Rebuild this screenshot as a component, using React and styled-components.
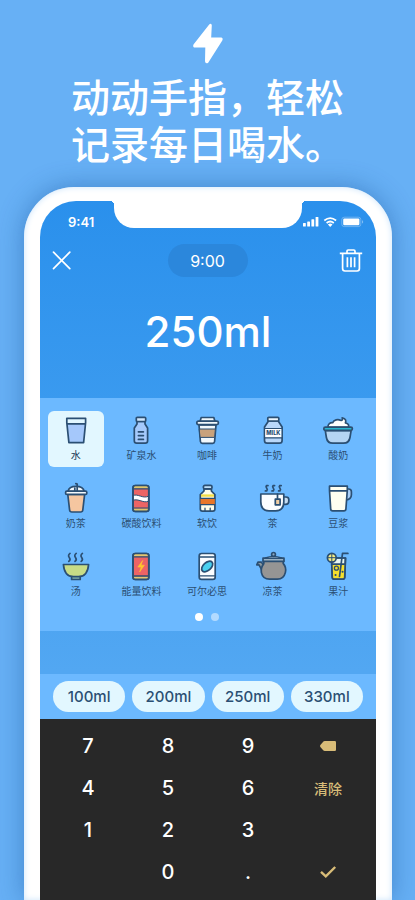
import React from 'react';
import styled, { createGlobalStyle } from 'styled-components';

const ink = '#2b4f73';

const GlobalStyle = createGlobalStyle`
  * {
    box-sizing: border-box;
  }
  body {
    margin: 0;
    background: #67b0f5;
    font-family: Inter, 'Noto Sans CJK SC', sans-serif;
  }
  button {
    margin: 0;
    padding: 0;
    border: 0;
    background: none;
    color: inherit;
    font: inherit;
    cursor: pointer;
  }
  svg {
    display: block;
    overflow: visible;
  }
`;
const Page = styled.main`
  display: flex;
  flex-direction: column;
  min-height: 100vh;
  overflow: hidden;
`;
const Intro = styled.header`
  display: flex;
  flex-direction: column;
  align-items: center;
  padding: 23px 0 19px;
`;
const Title = styled.h1`
  margin: 10px 0 0;
  color: #fff;
  font-size: 39px;
  font-weight: 500;
  line-height: 47px;
`;
const Phone = styled.section`
  flex: 1;
  display: flex;
  flex-direction: column;
  margin: 0 23px 0 24px;
  padding: 14px 16px 0;
  border-radius: 50px 50px 0 0;
  background: #fff;
  box-shadow: inset 0 0 6px #cbe4fb, 0 0 26px rgba(20, 80, 150, 0.45);
`;
const Screen = styled.div`
  flex: 1;
  display: flex;
  flex-direction: column;
  border-radius: 36px 36px 0 0;
  overflow: hidden;
  background: linear-gradient(#2a90ec 0, #3a9aef 200px, #52a7f2 470px);
`;
const StatusBar = styled.div`
  display: grid;
  grid-template-columns: 74px 1fr 74px;
  grid-template-rows: 27px;
  color: #fff;
`;
const Clock = styled.span`
  padding: 13px 0 0 28px;
  font-size: 13px;
  font-weight: 600;
  line-height: 16px;
`;
const Notch = styled.div`
  position: relative;
  border-radius: 0 0 20px 20px;
  background: #fff;
  &::before,
  &::after {
    content: '';
    position: absolute;
    top: 0;
    width: 4px;
    height: 4px;
  }
  &::before {
    right: 100%;
    background: radial-gradient(circle at 0 100%, transparent 4px, #fff 4px);
  }
  &::after {
    left: 100%;
    background: radial-gradient(circle at 100% 100%, transparent 4px, #fff 4px);
  }
`;
const Signals = styled.div`
  padding: 15px 0 0 1px;
`;
const Toolbar = styled.div`
  display: flex;
  align-items: center;
  justify-content: space-between;
  height: 33px;
  margin-top: 16px;
  padding: 0 13px 0 12px;
`;
const IconButton = styled.button`
  width: 24px;
  height: 24px;
`;
const TimeButton = styled.button`
  width: 80px;
  height: 33px;
  border-radius: 17px;
  background: #2b87dc;
  color: #fff;
  font-size: 16px;
`;
const Amount = styled.output`
  height: 121px;
  color: #fff;
  font-size: 42px;
  font-weight: 500;
  line-height: 110px;
  text-align: center;
`;
const Picker = styled.div`
  padding: 13px 5px 10px 3px;
  background: #6cb9ff;
`;
const DrinkGrid = styled.div`
  display: grid;
  grid-template-columns: repeat(5, 1fr);
  row-gap: 12px;
  justify-items: center;
`;
const DrinkButton = styled.button`
  display: flex;
  flex-direction: column;
  align-items: center;
  gap: 2px;
  width: 56px;
  height: 56px;
  padding-top: 4px;
  border-radius: 6px;
  background: ${props => (props.$active ? '#e2f7ff' : 'transparent')};
  color: ${props => (props.$active ? '#173a55' : ink)};
  font-size: 10px;
  line-height: 14px;
  white-space: nowrap;
`;
const Dots = styled.div`
  display: flex;
  justify-content: center;
  gap: 8px;
  padding-top: 10px;
`;
const Dot = styled.button`
  width: 8px;
  height: 8px;
  border-radius: 50%;
  background: ${props => (props.$active ? '#fff' : '#b3daff')};
`;
const QuickBar = styled.div`
  display: flex;
  gap: 7px;
  margin-top: 43px;
  padding: 7px 13px;
  background: #6cb9ff;
`;
const QuickButton = styled.button`
  flex: 1;
  height: 31px;
  border-radius: 16px;
  background: #e2f7ff;
  color: ${ink};
  font-size: 15px;
  font-weight: 500;
`;
const Keypad = styled.div`
  flex: 1;
  display: grid;
  grid-template-columns: repeat(4, 1fr);
  grid-auto-rows: 42px;
  padding: 6px 8px 7px;
  background: #282828;
`;
const Key = styled.button`
  display: flex;
  align-items: center;
  justify-content: center;
  grid-column: ${props => props.$col};
  color: ${props => (props.$action ? '#d8bc78' : '#fff')};
  font-size: ${props => (props.$action ? '14px' : '20px')};
  font-weight: 500;
`;

const Drawing = ({ children }) => (
  <svg
    width="32"
    height="31"
    viewBox="0 0 32 31"
    fill="none"
    stroke={ink}
    strokeWidth="1.7"
    strokeLinecap="round"
    strokeLinejoin="round"
    aria-hidden="true"
  >
    {children}
  </svg>
);

const Water = () => (
  <Drawing>
    <path d="M7 3.5h18.5L23.2 27.5H9.3Z" fill="#e2f7ff" stroke="none" />
    <path d="M7.4 9h17.6L23.2 27.5H9.3Z" fill="#a5c8fb" stroke="none" />
    <path d="M6.8 3.3h18.8V7.6L23.6 27.6H8.9L6.8 7.6ZM7.3 8.8h17.8" />
  </Drawing>
);
const MineralWater = () => (
  <Drawing>
    <path d="M12 6.5V9L9.3 13v12.8q0 2.4 2.4 2.4h8.5q2.4 0 2.4-2.4V13L20 9V6.5Z" fill="#a5cafc" />
    <rect x="11.3" y="2.3" width="9.4" height="4.2" rx="1" fill="#d2e8ff" />
    <path d="M13.4 16.8h5M13.4 20.6h5M13.4 24.4h5" />
  </Drawing>
);
const Coffee = () => (
  <Drawing>
    <path d="M8 10h17l-1.4 16.5q-.2 1.8-2 1.8H11.4q-1.8 0-2-1.8Z" fill="#f1f8fc" />
    <path d="M8.6 14h15.8l-.8 8.4H9.4Z" fill="#c8a27c" strokeWidth="1" />
    <path d="M9 6.5 10.2 2.5h12.6L24 6.5Z" fill="#f1f8fc" />
    <rect x="5.8" y="6.2" width="21.6" height="3.4" rx="1.6" fill="#f1f8fc" />
  </Drawing>
);
const Milk = () => (
  <Drawing>
    <path d="M11.5 6 7.5 12v13.5q0 2.7 2.7 2.7h12.2q2.7 0 2.7-2.7V12L21.2 6Z" fill="#b9d8fa" />
    <path d="M8.3 13.8h16v8.8h-16Z" fill="#fff" stroke="none" />
    <path d="M7.5 13.5h17.6M7.5 22.8h17.6" strokeWidth="1.2" />
    <rect x="10.8" y="2.3" width="11" height="3.7" rx="1" fill="#eff8ff" />
    <text x="16.4" y="20.2" textAnchor="middle" fill={ink} stroke="none" fontSize="5.6" fontWeight="800">
      MILK
    </text>
  </Drawing>
);
const Yogurt = () => (
  <Drawing>
    <path d="M6 12.4C5.6 9 8.4 7.4 10.7 7.7 11.9 4.8 16 4 18.4 5.3 20.3 5.9 21 4.4 20.2 2.8 24 3.4 24.2 6 23.4 7.8 26.8 8.6 27 10.6 26.4 12.4Z" fill="#fff" />
    <path d="M3.3 15.6h25.8L28 22.5q-1 5.7-6.6 5.7H10.9Q5.3 28.2 4.4 22.5Z" fill="#b5d5f3" />
    <rect x="1.8" y="12.2" width="28.6" height="3.2" rx="1.6" fill="#29b7d1" />
  </Drawing>
);
const MilkTea = () => (
  <Drawing>
    <path d="M7.8 11.5h16.8L22.8 27q-.2 2-2.2 2h-8.8q-2 0-2.2-2Z" fill="#f5c6a0" />
    <path d="M8 8.5C8.6 5 11.6 3.3 16 3.3S23.6 5 24.2 8.5Z" fill="#f3f9fd" />
    <rect x="5.6" y="8.2" width="21.2" height="3.2" rx="1.2" fill="#f3f9fd" />
    <path d="M14.8 8V5M17.2 8V1L15.8.6" />
  </Drawing>
);
const Soda = () => (
  <Drawing>
    <rect x="8" y="2.5" width="15.8" height="25.8" rx="2.4" fill="#ec6464" />
    <path d="M9 3h14l.4 2.6H8.6ZM8.6 25.4h14.8L23 28H9Z" fill="#dfc56b" stroke="none" />
    <path d="M8.4 12.4c4.5-2 9.5 3.6 15 .8v5c-4.8 2.4-10-3-15-1Z" fill="#fff" strokeWidth="1" />
    <path d="M8.5 5.9h15M8.5 25h15" strokeWidth="1.2" />
    <rect x="8" y="2.5" width="15.8" height="25.8" rx="2.4" />
  </Drawing>
);
const SoftDrink = () => (
  <Drawing>
    <path d="M13 6v2l-3.7 3.7v14.4q0 2.1 2.1 2.1h10.4q2.1 0 2.1-2.1V11.7L20.4 8V6Z" fill="#fffde9" />
    <path d="M10 11.4h13v2.3H10Z" fill="#f3dc45" stroke="none" />
    <path d="M9.5 15.6h14.3v5.7H9.5Z" fill="#e97628" stroke="none" />
    <path d="M9.5 15.3h14.3M9.5 21.6h14.3" strokeWidth="1.3" />
    <path d="M14 25.2v2.8M19.2 25.2v2.8" strokeWidth="1.3" />
    <rect x="12.4" y="2.3" width="8.6" height="3.6" rx="1.5" fill="#bfe0f8" />
  </Drawing>
);
const Tea = () => (
  <Drawing>
    <path d="M26.6 14h2.4q2.8 0 2.8 2.6v1.6q0 3.2-3.2 3.2h-2.6" fill="#c4dcf2" />
    <path d="M3.8 11h23v7.8q0 9-8.2 9h-6.6q-8.2 0-8.2-9Z" fill="#fbfdff" />
    <path d="M20.5 11v5.2M18.3 16.2h4.8v5.6h-4.8Z" fill="#f0cda2" />
    <path d="M11 2.6H9.5q-1 1.2.2 2.5t0 2.8H8.4M17.6 2.6h-1.5q-1 1.2.2 2.5t0 2.8H15M24.2 2.6h-1.5q-1 1.2.2 2.5t0 2.8h-1.3" />
  </Drawing>
);
const SoyMilk = () => (
  <Drawing>
    <path d="M24.5 6h2.2q2.7 0 2.7 2.8v2.9q0 4.5-5.6 5.3" fill="#a8cef7" />
    <path d="M7.5 3.2h17.8v4.2L23.9 26q-.1 1.8-2 1.8H10.7q-1.9 0-2-1.8L7.5 7.4Z" fill="#fffff1" />
    <path d="M8 7.8h16.9" />
  </Drawing>
);
const Soup = () => (
  <Drawing>
    <path d="M11.6 25.4h8.6v3h-8.6Z" fill="#ace0c6" />
    <path d="M3.4 13.5h25.2q-1 12.2-10 12.2h-5.2q-9 0-10-12.2Z" fill="#c8dc86" />
    <path d="M10 2.4q-2.4 1.8-.7 4t-.5 4M16.2 2.4q-2.4 1.8-.7 4t-.5 4M22.4 2.4q-2.4 1.8-.7 4t-.5 4" />
  </Drawing>
);
const EnergyDrink = () => (
  <Drawing>
    <rect x="8" y="2.5" width="15.8" height="25.8" rx="2.4" fill="#ed6365" />
    <path d="M9 3h14l.4 2.6H8.6ZM8.6 25.4h14.8L23 28H9Z" fill="#e4c671" stroke="none" />
    <path d="M8.5 5.9h15M8.5 25h15" strokeWidth="1.3" />
    <path d="m17.5 9.8-4.7 6.3h3.4l-1.6 4.9 4.8-6.8h-3.2Z" fill="#ffc52d" stroke="#ffc52d" strokeWidth=".6" />
    <rect x="8" y="2.5" width="15.8" height="25.8" rx="2.4" />
  </Drawing>
);
const Calpis = () => (
  <Drawing>
    <rect x="8.2" y="2.5" width="16" height="25.8" rx="2.4" fill="#fbfdff" />
    <path d="M8.7 6h15M8.7 24.8h15" strokeWidth="1.3" />
    <ellipse cx="16.2" cy="15.5" rx="6.5" ry="4" transform="rotate(-42 16.2 15.5)" fill="#49d0ef" />
  </Drawing>
);
const HerbalTea = () => (
  <Drawing>
    <path d="M5.4 19.8 1.8 13.6-.2 13.8 1 11l3.4.2 2.4 3" fill="#8d999f" />
    <path d="M6.8 8.4h19.4v4q3.4 4 2.2 9-1.6 6.8-8 6.8h-7.8q-6.8 0-8.2-6.6-.9-5 2.4-9Z" fill="#969594" />
    <path d="M6 7.2h21v3.2H6Z" fill="#9ab2c4" />
    <path d="M8.4 7q7.8-3 16.2 0" fill="#8eabc4" />
    <circle cx="16.5" cy="3.4" r="1.9" fill="#8ba8c1" />
  </Drawing>
);
const Juice = () => (
  <Drawing>
    <path d="M9.5 7h14l-.8 19.2q-.1 2-2.1 2h-8.2q-2 0-2.1-2Z" fill="#e7f6f3" />
    <path d="M10 13.5h12.8l-.6 12.4q-.1 1.5-1.6 1.5h-8q-1.6 0-1.7-1.5Z" fill="#f5df2d" stroke="none" />
    <path d="M9.5 7h14l-.8 19.2q-.1 2-2.1 2h-8.2q-2 0-2.1-2Z" />
    <path d="M9.8 13.2h13.3M17.5 25.5 20.5 2.4h5.4" />
    <circle cx="9.8" cy="6.7" r="4.4" fill="#f6ec82" />
    <path d="M9.8 2.7v8M5.8 6.7h8" strokeWidth="1" />
    <circle cx="14.4" cy="17.2" r="2" strokeWidth="1.3" />
    <path d="M13.5 24h.1M20.5 20.7h.1" strokeWidth="2" />
  </Drawing>
);

const drinks = [
  { name: '水', Icon: Water },
  { name: '矿泉水', Icon: MineralWater },
  { name: '咖啡', Icon: Coffee },
  { name: '牛奶', Icon: Milk },
  { name: '酸奶', Icon: Yogurt },
  { name: '奶茶', Icon: MilkTea },
  { name: '碳酸饮料', Icon: Soda },
  { name: '软饮', Icon: SoftDrink },
  { name: '茶', Icon: Tea },
  { name: '豆浆', Icon: SoyMilk },
  { name: '汤', Icon: Soup },
  { name: '能量饮料', Icon: EnergyDrink },
  { name: '可尔必思', Icon: Calpis },
  { name: '凉茶', Icon: HerbalTea },
  { name: '果汁', Icon: Juice },
];
const quickAmounts = ['100', '200', '250', '330'];
const digitRows = [['7', '8', '9'], ['4', '5', '6'], ['1', '2', '3'], ['', '0', '.']];

const Bolt = () => (
  <svg width="32" height="41" viewBox="0 0 32 41" aria-hidden="true">
    <path
      d="M17.2 1.5 1.5 21.4q-1.2 3 1.7 3.2h10.1L13 38.2q.4 3.2 3.2 1.6L30.3 17.5q1.2-2.6-1.3-2.9h-9.8L19.8 2.2q-.7-2.3-2.6-.7Z"
      fill="#fff"
    />
  </svg>
);
const SignalIcons = () => (
  <svg width="60" height="12" viewBox="0 0 60 12" fill="#fff" aria-hidden="true">
    <rect x="0" y="7" width="2.8" height="3.6" rx=".6" />
    <rect x="4.2" y="5.4" width="2.8" height="5.2" rx=".6" />
    <rect x="8.4" y="3.2" width="2.8" height="7.4" rx=".6" />
    <rect x="12.6" y="1" width="2.8" height="9.6" rx=".6" />
    <path d="M21.3 4.5q5.9-4.8 11.8 0M23.6 7q3.6-3 7.2 0" fill="none" stroke="#fff" strokeWidth="1.7" />
    <path d="m24.9 8.4 2.3 2.5 2.3-2.5q-2.3-1.8-4.6 0Z" />
    <rect x="38.8" y="1.2" width="19" height="9.4" rx="2.4" fill="none" stroke="#fff" strokeOpacity=".3" />
    <rect x="40.2" y="2.5" width="16.2" height="6.8" rx="1.2" />
    <path d="M59 4.2v3.4q1.2-.4 1.2-1.7T59 4.2Z" fillOpacity=".4" />
  </svg>
);
const CloseIcon = () => (
  <svg width="20" height="24" viewBox="0 0 20 24" stroke="#fff" strokeWidth="1.7" strokeLinecap="round" aria-hidden="true">
    <path d="m1.5 3.2 16.3 16.4M17.8 3.2 1.5 19.6" />
  </svg>
);
const TrashIcon = () => (
  <svg width="24" height="24" viewBox="0 0 24 24" fill="none" stroke="#fff" strokeWidth="1.7" aria-hidden="true">
    <path d="M.8 4.4h22.4M8 4V2.2q0-1.2 1.2-1.2h5.6Q16 1 16 2.2V4M3.6 4.8v14.8q0 2.4 2.4 2.4h12q2.4 0 2.4-2.4V4.8M8.4 8.2v10M12 8.2v10M15.6 8.2v10" />
  </svg>
);

export default function App() {
  const [selected, setSelected] = React.useState('水');
  const [amount, setAmount] = React.useState('250');
  const [page, setPage] = React.useState(0);

  const press = key => setAmount(amount === '0' && key !== '.' ? key : amount + key);

  return (
    <Page>
      <GlobalStyle />
      <Intro>
        <Bolt />
        <Title lang="zh-CN">
          动动手指，轻松
          <br />
          记录每日喝水。
        </Title>
      </Intro>
      <Phone>
        <Screen>
          <StatusBar>
            <Clock>9:41</Clock>
            <Notch />
            <Signals>
              <SignalIcons />
            </Signals>
          </StatusBar>
          <Toolbar>
            <IconButton aria-label="关闭">
              <CloseIcon />
            </IconButton>
            <TimeButton>9:00</TimeButton>
            <IconButton aria-label="删除">
              <TrashIcon />
            </IconButton>
          </Toolbar>
          <Amount>{amount}ml</Amount>
          <Picker>
            <DrinkGrid>
              {drinks.map(({ name, Icon }) => (
                <DrinkButton
                  key={name}
                  $active={name === selected}
                  aria-pressed={name === selected}
                  onClick={() => setSelected(name)}
                >
                  <Icon />
                  {name}
                </DrinkButton>
              ))}
            </DrinkGrid>
            <Dots>
              {[0, 1].map(i => (
                <Dot key={i} $active={i === page} aria-label={`第${i + 1}页`} onClick={() => setPage(i)} />
              ))}
            </Dots>
          </Picker>
          <QuickBar>
            {quickAmounts.map(value => (
              <QuickButton key={value} onClick={() => setAmount(value)}>
                {value}ml
              </QuickButton>
            ))}
          </QuickBar>
          <Keypad>
            {digitRows.map((row, i) => (
              <React.Fragment key={i}>
                {row.map((key, j) => key && (
                  <Key key={key} $col={j + 1} onClick={() => press(key)}>
                    {key}
                  </Key>
                ))}
                {i === 0 && (
                  <Key $col={4} $action aria-label="退格" onClick={() => setAmount(amount.slice(0, -1) || '0')}>
                    <svg width="16" height="10" viewBox="0 0 16 10" fill="currentColor" aria-hidden="true">
                      <path d="M4.8 0h10q1.2 0 1.2 1.2v7.6q0 1.2-1.2 1.2h-10Q3.8 10 3.2 9.3L.4 6q-.8-1 0-2L3.2.7Q3.8 0 4.8 0Z" />
                    </svg>
                  </Key>
                )}
                {i === 1 && (
                  <Key $col={4} $action onClick={() => setAmount('0')}>
                    清除
                  </Key>
                )}
                {i === 3 && (
                  <Key $col={4} $action aria-label="确定">
                    <svg width="16" height="12" viewBox="0 0 16 12" fill="none" stroke="currentColor" strokeWidth="2.4" aria-hidden="true">
                      <path d="m1 5.8 4.8 4.6L15.2 1" />
                    </svg>
                  </Key>
                )}
              </React.Fragment>
            ))}
          </Keypad>
        </Screen>
      </Phone>
    </Page>
  );
}
